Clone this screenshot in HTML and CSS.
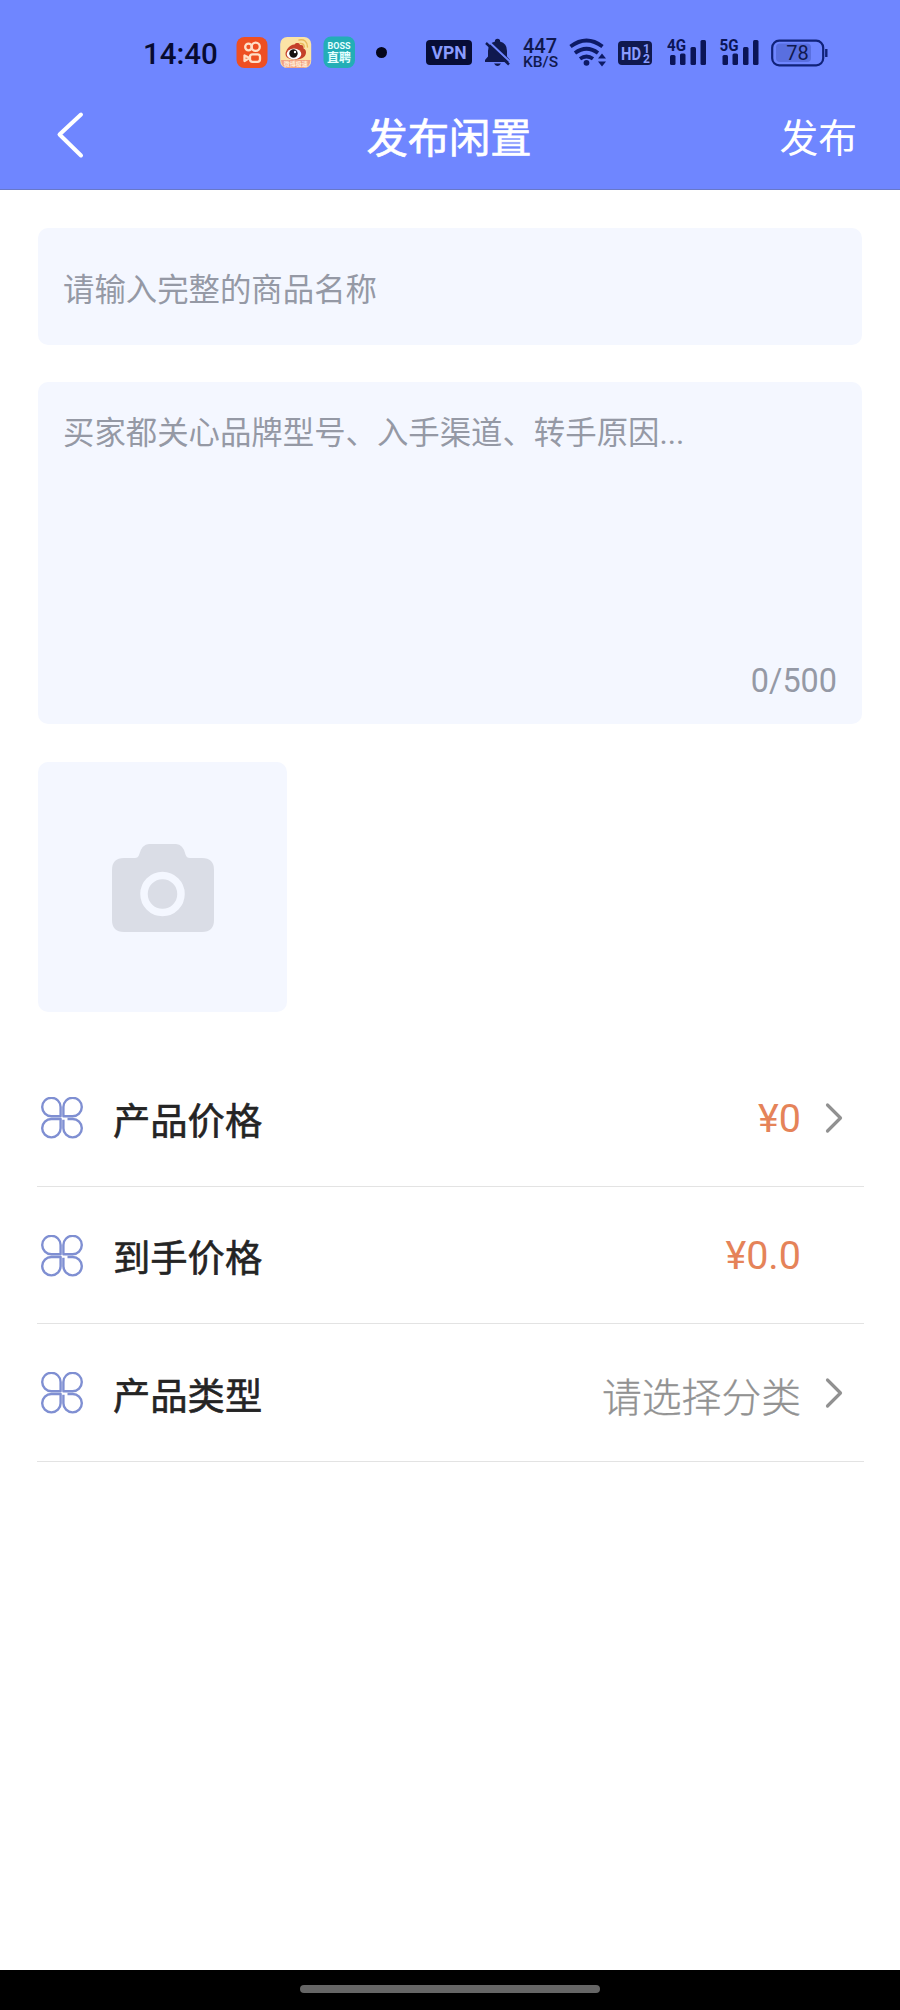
FILE: index.html
```html
<!DOCTYPE html>
<html lang="zh-CN">
<head>
<meta charset="utf-8">
<title>发布闲置</title>
<link rel="stylesheet" href="styles.css">
</head>
<body>
<svg width="0" height="0" class="defs">
  <symbol id="clover" viewBox="0 0 42 42">
    <g fill="none" stroke="#7f8fd2" stroke-width="2.400" stroke-linejoin="round">
      <path d="M19.600 19.200h-9.100a9.200 9.200 0 1 1 9.100-9.200z"/>
      <path d="M22.400 19.200h9.100a9.200 9.200 0 1 0-9.100-9.200z"/>
      <path d="M19.600 22h-9.100a9.200 9.200 0 1 0 9.100 9.200z"/>
      <path d="M26.500 22h5a9.200 9.200 0 1 1-9.100 9.200v-8.500"/>
    </g>
  </symbol>
  <symbol id="chevron" viewBox="0 0 18 32">
    <path d="M2.500 3 15.500 16 2.500 29" fill="none" stroke="#919191" stroke-width="3.200" stroke-linecap="round" stroke-linejoin="round"/>
  </symbol>
</svg>
<div class="screen">
  <header class="header">
    <div class="status">
      <span class="time">14:40</span>
      <svg class="app" viewBox="236 36 32 32" width="32" height="32">
        <rect x="236.500" y="37" width="31" height="31" rx="8" fill="#ee4f22"/>
        <g fill="none" stroke="#ffe0c8" stroke-width="2.300"><circle cx="248.500" cy="47" r="3.300"/><circle cx="255.700" cy="46.700" r="4.100"/><rect x="250" y="54.300" width="10" height="7.500" rx="2.500"/><path d="M249.500 58 244.500 55.500v5.500z" stroke-linejoin="round"/></g>
      </svg>
      <svg class="app gap12" viewBox="280 36 32 32" width="32" height="32">
        <rect x="280.200" y="37" width="31" height="31" rx="7" fill="#fbe3a6"/>
        <path d="M281 60h29.500q-.5 7.500-7 8h-16q-6-.5-6.500-8z" fill="#f2a183"/>
        <path d="M285.500 54c0-4 5-10 9-9.500 1.500-2 5-2 5.500.5 3-.5 4 1.500 3.500 3.500 4 1.500 3 7.500-1 9.500-6 3-17 2-17-4z" fill="#c4402a"/>
        <ellipse cx="294" cy="54" rx="7.300" ry="5.400" fill="#fff"/>
        <circle cx="293.500" cy="53.500" r="4.200" fill="#17110f"/><circle cx="295" cy="52" r="1.200" fill="#fff"/>
        <path d="M299 40q8-1.500 8.500 7M300 43.500q4-.5 4.300 3.500" fill="none" stroke="#e9b95a" stroke-width="1.400" stroke-linecap="round"/>
        <text x="295.700" y="66" class="wb" text-anchor="middle">微博极速</text>
      </svg>
      <svg class="app gap12" viewBox="323 36 32 32" width="32" height="32">
        <rect x="323.500" y="36.500" width="31.500" height="31.500" rx="7.500" fill="#23aeb6"/>
        <text x="339" y="49" class="boss" text-anchor="middle" textLength="23">BOSS</text>
        <text x="339" y="62" class="boss-cn" text-anchor="middle">直聘</text>
      </svg>
      <span class="dot"></span>
      <span class="vpn">VPN</span>
      <svg class="ico bell" viewBox="484 32 28 40" width="28" height="40">
        <path d="M485 62v-2l3-3.500V51q0-8 7-9.500v-1.500q2.500-2.500 5 0v1.500q7 1.500 7 9.500v5.500l3 3.500v2zM494 63.500h7q-3.500 5-7 0z" fill="#10194f"/>
        <path d="M488 41 511 62.500" stroke="#6f86ff" stroke-width="2"/>
        <path d="M486 43 509 64.500" stroke="#10194f" stroke-width="2.400"/>
      </svg>
      <span class="speed"><b>447</b><i>KB/S</i></span>
      <svg class="ico wifi" viewBox="569 32 38 40" width="38" height="40">
        <g fill="none" stroke="#0d1a66" stroke-width="3.800"><path d="M570.500 46.500q16-12 32 0"/><path d="M575 53q11.500-8.500 23 0"/><path d="M580 58.800q6.500-4.500 13 0"/></g>
        <circle cx="586.500" cy="62.800" r="2.900" fill="#0d1a66"/>
        <path d="M598 58.500 602 53.500 606 58.500zM598 61.500 602 66.500 606 61.500z" fill="#0d1a66"/>
      </svg>
      <svg class="ico hd" viewBox="618 32 34 40" width="34" height="40">
        <rect x="618" y="41" width="34" height="24" rx="4" fill="#10194f"/>
        <g fill="#8a9cff"><text x="621" y="60" class="hdt" textLength="20" lengthAdjust="spacingAndGlyphs">HD</text><text x="643" y="53" class="hds">1</text><text x="643" y="63" class="hds">2</text></g>
      </svg>
      <svg class="ico g4" viewBox="667 32 40 40" width="40" height="40">
        <g fill="#0b1557"><text x="667" y="51" class="gen" textLength="19" lengthAdjust="spacingAndGlyphs">4G</text>
        <rect x="670" y="55" width="5.500" height="10" rx="1.500"/><rect x="680" y="53.500" width="5.500" height="11.500" rx="1.500"/><rect x="690.500" y="47" width="5.500" height="18" rx="1.500"/><rect x="700.500" y="40" width="5.500" height="25" rx="1.500"/></g>
      </svg>
      <svg class="ico g5" viewBox="719 32 40 40" width="40" height="40">
        <g fill="#0b1557"><text x="719.500" y="51" class="gen" textLength="19" lengthAdjust="spacingAndGlyphs">5G</text>
        <rect x="722.500" y="55" width="5.500" height="10" rx="1.500"/><rect x="732.500" y="53.500" width="5.500" height="11.500" rx="1.500"/><rect x="743" y="47" width="5.500" height="18" rx="1.500"/><rect x="753" y="40" width="5.500" height="25" rx="1.500"/></g>
      </svg>
      <svg class="ico bat" viewBox="771 32 58 40" width="58" height="40">
        <rect x="776" y="43.500" width="35" height="18.500" rx="4" fill="#596fe0"/>
        <rect x="772.200" y="40.700" width="51" height="24.600" rx="7" fill="none" stroke="#10227a" stroke-width="2.200"/>
        <path d="M826.300 49v8" stroke="#10227a" stroke-width="2.400"/>
        <text x="797.500" y="60" class="pct" text-anchor="middle">78</text>
      </svg>
    </div>
    <div class="nav">
      <svg class="back" viewBox="0 0 30 50" width="30" height="50"><path d="M26 4.500 4.500 24.500 26 45.500" fill="none" stroke="#fff" stroke-width="4" stroke-linecap="round" stroke-linejoin="round"/></svg>
      <h1 class="title">发布闲置</h1>
      <span class="publish">发布</span>
    </div>
  </header>
  <main class="content">
    <div class="field name">请输入完整的商品名称</div>
    <div class="field desc"><span>买家都关心品牌型号、入手渠道、转手原因...</span><span class="count">0/500</span></div>
    <div class="photo">
      <svg viewBox="0 0 102 88" width="102" height="88">
        <path d="M12 14h11q3 0 4-3Q30 0 37 0h27q7 0 9.500 10.500 1 3.500 4.500 3.500h12q12 0 12 12v50q0 12-12 12H12Q0 88 0 76V26Q0 14 12 14z" fill="#dadde6"/>
        <circle cx="50.500" cy="50" r="18.500" fill="none" stroke="#f4f7ff" stroke-width="7.500"/>
      </svg>
    </div>
    <div class="rows">
      <div class="row"><svg class="clover"><use href="#clover"/></svg><span class="label">产品价格</span><span class="price">¥0</span><svg class="chev"><use href="#chevron"/></svg></div>
      <div class="row"><svg class="clover"><use href="#clover"/></svg><span class="label">到手价格</span><span class="price no-chev">¥0.0</span></div>
      <div class="row"><svg class="clover"><use href="#clover"/></svg><span class="label">产品类型</span><span class="pick">请选择分类</span><svg class="chev"><use href="#chevron"/></svg></div>
    </div>
  </main>
  <footer class="gesture"><span class="pill"></span></footer>
</div>
</body>
</html>
```
FILE: styles.css
```css
* { box-sizing: border-box; }
body { margin: 0; background: #fff; font-family: Roboto, "Noto Sans CJK SC", sans-serif; }
.defs { display: block; height: 0; }
.screen { width: 900px; height: 2010px; display: flex; flex-direction: column; }
.header { height: 190px; background: #6f86ff; border-bottom: 1px solid #6878c8; flex: none; }
.status { display: flex; align-items: center; height: 72px; padding: 32px 0 0 143px; color: #070b30; }
.status > * { flex: none; }
.time { width: 93px; font-size: 29.500px; font-weight: 500; line-height: 40px; padding-top: 3px; white-space: nowrap; }
.gap12 { margin-left: 12px; }
.gap12 + .gap12 { margin-left: 11px; }
.dot { width: 11px; height: 11px; border-radius: 50%; background: #04061c; margin-left: 21px; }
.vpn { width: 46px; height: 25px; border-radius: 4px; background: #070d36; color: #8a9cff; font-size: 17.500px; font-weight: 700; line-height: 26px; text-align: center; margin-left: 39px; }
.bell { margin-left: 12px; }
.speed { width: 36px; margin-left: 11px; display: flex; flex-direction: column; color: #10194f; white-space: nowrap; padding-top: 3px; }
.speed b { font-size: 20px; line-height: 17px; font-weight: 500; }
.speed i { font-size: 15.500px; line-height: 15px; font-style: normal; font-weight: 500; }
.wifi { margin-left: 10px; }
.hd { margin-left: 11px; }
.g4 { margin-left: 15px; }
.g5 { margin-left: 12px; }
.bat { margin-left: 12px; }
.wb { font-size: 6px; font-weight: 700; fill: #fff0d8; }
.boss { font-size: 9px; font-weight: 700; fill: #e4ffff; }
.boss-cn { font-size: 12px; font-weight: 700; fill: #e4ffff; }
.hdt { font-size: 19px; font-weight: 700; }
.hds { font-size: 12px; font-weight: 700; }
.gen { font-size: 17px; font-weight: 700; }
.pct { font-size: 20px; font-weight: 400; fill: #10194f; }
.nav { display: grid; grid-template-columns: 200px 1fr 200px; align-items: center; height: 130px; color: #fff; }
.back { margin: 0 0 4px 55px; }
.title { margin: 0; font-size: 41.300px; line-height: 60px; font-weight: 400; -webkit-text-stroke: .7px #fff; text-align: center; height: 56px; padding-right: 2px; }
.publish { font-size: 38.800px; line-height: 60px; height: 56px; text-align: right; padding-right: 43px; }
.content { flex: 1; padding: 38px 38px 0; display: flex; flex-direction: column; }
.field { background: #f4f7ff; border-radius: 10px; padding: 0 25px; color: #9599a5; font-size: 31.400px; flex: none; white-space: nowrap; }
.name { height: 117px; line-height: 125px; }
.desc { height: 342px; margin-top: 37px; padding-top: 29px; padding-bottom: 20px; line-height: 46px; display: flex; flex-direction: column; justify-content: space-between; }
.count { align-self: flex-end; font-size: 32.400px; }
.photo { width: 249px; height: 250px; margin-top: 38px; padding: 1px 0 0 1px; background: #f4f7ff; border-radius: 10px; display: flex; align-items: center; justify-content: center; flex: none; }
.rows { margin: 37px -2px 0 -1px; }
.row { display: flex; align-items: center; height: 137.500px; border-bottom: 1.500px solid #e3e3e3; padding: 2px 21px 0 4px; }
.clover { width: 42px; height: 42px; }
.label { margin-left: 30px; margin-top: 1px; font-size: 37.300px; font-weight: 400; -webkit-text-stroke: .6px #242424; color: #242424; }
.price { margin-left: auto; font-size: 39.500px; color: #e58359; }
.no-chev { margin-right: 42px; }
.pick { margin-left: auto; margin-top: 2px; font-size: 39.800px; font-weight: 300; -webkit-text-stroke: .3px #929292; color: #929292; }
.chev { width: 18px; height: 32px; margin-left: 24px; }
.gesture { height: 40px; background: #000; display: flex; justify-content: center; padding-top: 15px; flex: none; }
.pill { width: 300px; height: 8px; border-radius: 4px; background: #666; }
```
